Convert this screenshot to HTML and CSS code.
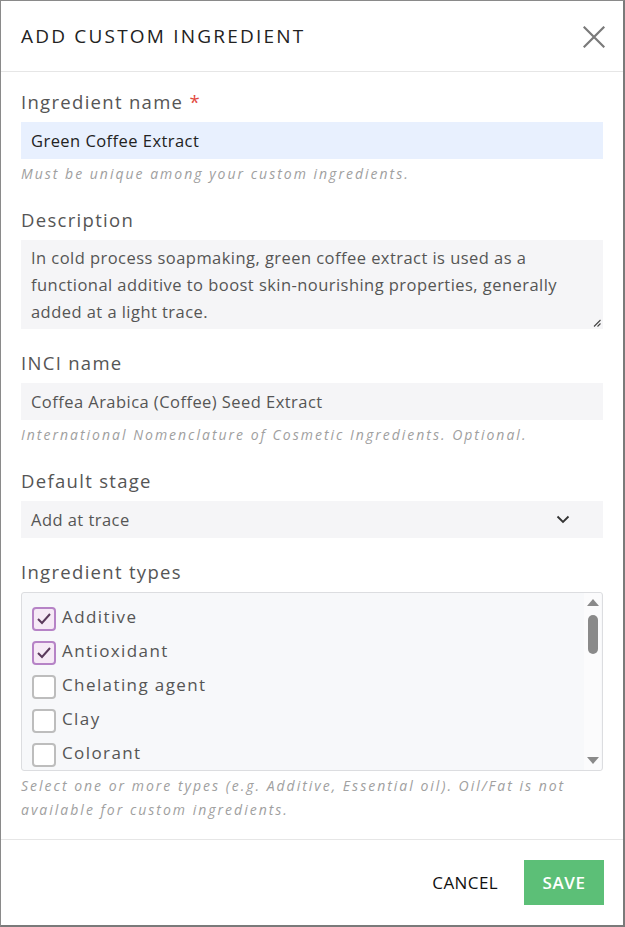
FILE: index.html
```html
<!DOCTYPE html>
<html lang="en">
<head>
<meta charset="utf-8">
<title>Add custom ingredient</title>
<link rel="stylesheet" href="styles.css">
</head>
<body>
<div class="dialog">
  <header class="dialog-header">
    <h1 class="dialog-title">ADD CUSTOM INGREDIENT</h1>
    <button class="close-btn" aria-label="Close">
      <svg width="22" height="22" viewBox="0 0 22 22"><path d="M1.5 1.5 L20.5 20.5 M20.5 1.5 L1.5 20.5" stroke="#7a7a7a" stroke-width="2.2" fill="none" stroke-linecap="square"/></svg>
    </button>
  </header>
  <div class="dialog-body">
    <div class="field">
      <label class="label">Ingredient name <span class="req">*</span></label>
      <div class="input input-filled">Green Coffee Extract</div>
      <div class="hint">Must be unique among your custom ingredients.</div>
    </div>
    <div class="field">
      <label class="label">Description</label>
      <div class="textarea">In cold process soapmaking, green coffee extract is used as a functional additive to boost skin-nourishing properties, generally added at a light trace.
        <svg class="resize" width="8" height="8" viewBox="0 0 8 8"><path d="M7.5 1 L1 7.5 M7.5 4.5 L4.5 7.5" stroke="#444" stroke-width="1.1"/></svg>
      </div>
    </div>
    <div class="field">
      <label class="label">INCI name</label>
      <div class="input">Coffea Arabica (Coffee) Seed Extract</div>
      <div class="hint">International Nomenclature of Cosmetic Ingredients. Optional.</div>
    </div>
    <div class="field">
      <label class="label">Default stage</label>
      <div class="input select">
        <span>Add at trace</span>
        <svg width="14" height="9" viewBox="0 0 14 9"><path d="M1.5 1.5 L7 7 L12.5 1.5" stroke="#333" stroke-width="1.8" fill="none"/></svg>
      </div>
    </div>
    <div class="field field-last">
      <label class="label">Ingredient types</label>
      <div class="listbox">
        <ul class="options">
          <li class="option"><span class="cb checked"><svg width="16" height="14" viewBox="0 0 16 14"><path d="M2 7 L6 11 L14 2" stroke="#5b3a5c" stroke-width="2" fill="none"/></svg></span>Additive</li>
          <li class="option"><span class="cb checked"><svg width="16" height="14" viewBox="0 0 16 14"><path d="M2 7 L6 11 L14 2" stroke="#5b3a5c" stroke-width="2" fill="none"/></svg></span>Antioxidant</li>
          <li class="option"><span class="cb"></span>Chelating agent</li>
          <li class="option"><span class="cb"></span>Clay</li>
          <li class="option"><span class="cb"></span>Colorant</li>
        </ul>
        <div class="scrollbar">
          <span class="arrow up"></span>
          <span class="thumb"></span>
          <span class="spacer"></span>
          <span class="arrow down"></span>
        </div>
      </div>
      <div class="hint">Select one or more types (e.g. Additive, Essential oil). Oil/Fat is not available for custom ingredients.</div>
    </div>
  </div>
  <footer class="dialog-footer">
    <button class="btn btn-text">CANCEL</button>
    <button class="btn btn-save">SAVE</button>
  </footer>
</div>
</body>
</html>
```
FILE: styles.css
```css
* { box-sizing: border-box; }
html, body { margin: 0; padding: 0; }
body {
  font-family: "Open Sans", "Noto Sans", sans-serif;
  background: #fff;
}
.dialog {
  width: 625px;
  height: 927px;
  border-top: 1px solid #8a8a8a;
  border-left: 1px solid #8a8a8a;
  border-right: 2px solid #7a7a7a;
  border-bottom: 2px solid #7a7a7a;
  display: flex;
  flex-direction: column;
  background: #fff;
}
.dialog-header {
  height: 71px;
  flex: none;
  display: flex;
  align-items: center;
  justify-content: space-between;
  padding: 0 18px 0 20px;
  border-bottom: 1px solid #e6e6e6;
}
.dialog-title {
  margin: 0;
  font-size: 19px;
  font-weight: 400;
  letter-spacing: 2.2px;
  color: #222;
}
.close-btn {
  border: 0;
  background: none;
  padding: 0;
  width: 22px;
  height: 22px;
  display: flex;
  margin-top: 1px;
}
.dialog-body {
  flex: 1;
  padding: 18px 20px 0 20px;
  border-bottom: 1px solid #e6e6e6;
}
.field { margin-bottom: 22px; }
.field-last { margin-bottom: 0; }
.label {
  display: block;
  font-size: 18.5px;
  line-height: 24px;
  letter-spacing: 1.3px;
  color: #555;
  margin-bottom: 8px;
}
.req { color: #e2493f; }
.input {
  height: 37px;
  background: #f5f5f7;
  padding: 0 10px;
  display: flex;
  align-items: center;
  font-size: 16.5px;
  letter-spacing: 0.45px;
  color: #555;
}
.input-filled {
  background: #e8f0fe;
  color: #222;
}
.select { justify-content: space-between; padding-right: 33px; }
.hint {
  margin-top: 3px;
  font-size: 14px;
  line-height: 24px;
  font-style: italic;
  letter-spacing: 2px;
  color: #a0a0a0;
}
.textarea {
  position: relative;
  height: 89px;
  background: #f5f5f7;
  padding: 4px 10px;
  font-size: 16.5px;
  letter-spacing: 0.45px;
  line-height: 27px;
  color: #555;
}
.resize { position: absolute; right: 2px; bottom: 2px; }
.listbox {
  height: 179px;
  border: 1px solid #dcdde0;
  border-radius: 3px;
  background: #f7f8fa;
  display: flex;
  overflow: hidden;
}
.options {
  list-style: none;
  margin: 0;
  padding: 6px 0 0 10px;
  flex: 1;
}
.option {
  height: 34px;
  display: flex;
  align-items: center;
  font-size: 17px;
  letter-spacing: 1.4px;
  color: #555;
}
.cb {
  width: 24px;
  height: 24px;
  border: 2px solid #bdbdbd;
  border-radius: 4px;
  background: #fff;
  margin-right: 6px;
  margin-top: 5px;
  display: flex;
  align-items: center;
  justify-content: center;
  flex: none;
}
.cb.checked {
  border-color: #b683c6;
  background: #f6eaf6;
}
.scrollbar {
  width: 17px;
  background: #fbfbfc;
  display: flex;
  flex-direction: column;
  align-items: center;
  padding: 6px 0 6px;
  margin-right: 1px;
}
.arrow {
  width: 0;
  height: 0;
  border-left: 6px solid transparent;
  border-right: 6px solid transparent;
  flex: none;
}
.arrow.up { border-bottom: 7px solid #8a8a8a; }
.arrow.down { border-top: 7px solid #8a8a8a; }
.thumb {
  width: 10px;
  height: 39px;
  background: #8a8a8a;
  border-radius: 5px;
  margin-top: 9px;
  flex: none;
}
.spacer { flex: 1; }
.dialog-footer {
  flex: none;
  height: 85px;
  display: flex;
  justify-content: flex-end;
  align-items: flex-start;
  padding: 20px 19px 0 0;
  gap: 12px;
}
.btn {
  font-family: "Open Sans", "Noto Sans", sans-serif;
  border: 0;
  height: 45px;
  font-size: 16px;
  padding: 0 12px;
  background: none;
  cursor: pointer;
}
.btn-text { color: #111; font-size: 17px; letter-spacing: 0.4px; padding: 0 14px; }
.btn-save {
  background: #5cbf77;
  color: #fff;
  width: 80px;
  font-weight: 600;
  font-size: 17px;
  letter-spacing: 0.6px;
  padding: 0;
}
```
